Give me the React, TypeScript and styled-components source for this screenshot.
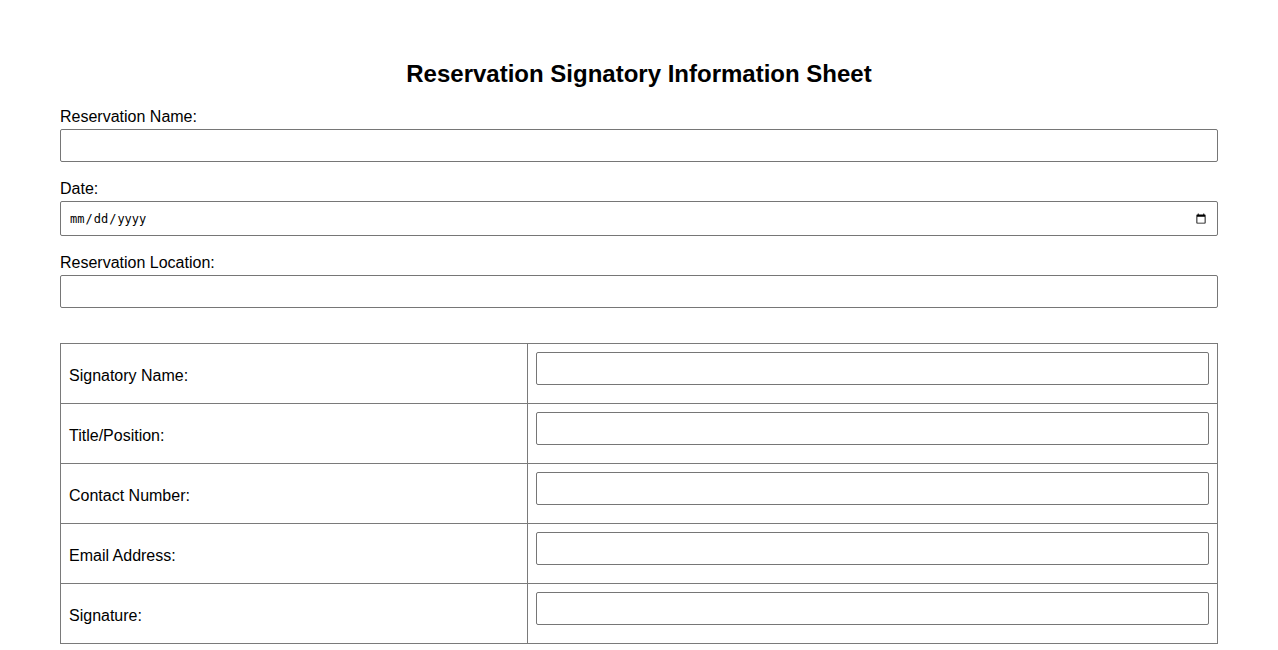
import styled, { createGlobalStyle } from "styled-components";

const GlobalStyle = createGlobalStyle`
  body {
    margin: 0;
    background: #fff;
    font-family: "Liberation Sans", Arial, sans-serif;
    color: #000;
  }
`;

const StyledSheet = styled.div`
  padding: 40px 60px 20px;

  h1 {
    margin: 20px 0 20px;
    text-align: center;
    font-size: 24px;
    font-weight: 700;
  }
`;

const Field = styled.div`
  margin-bottom: 18px;

  label {
    display: block;
    font-size: 16px;
    line-height: 18px;
    margin-bottom: 3px;
  }
`;

const TextInput = styled.input<{ $tall?: boolean }>`
  display: block;
  width: 100%;
  box-sizing: border-box;
  height: ${(p) => (p.$tall ? "35px" : "33px")};
  padding: 0 8px;
  border: 1px solid #767676;
  border-radius: 2px;
  background: #fff;
  font-family: "DejaVu Sans Mono", "Liberation Mono", monospace;
  font-size: 12px;
  color: #000;
`;

const SignatoryTable = styled.table`
  width: 100%;
  margin-top: 35px;
  border-collapse: collapse;
  table-layout: fixed;

  td {
    border: 1px solid #7a7a7a;
    padding: 8px;
    font-size: 16px;
    vertical-align: middle;
  }

  td.label {
    padding-top: 12px;
  }

  td input {
    margin-bottom: 10px;
  }
`;

const rows = [
  "Signatory Name:",
  "Title/Position:",
  "Contact Number:",
  "Email Address:",
  "Signature:",
];

const App = () => {
  return (
    <StyledSheet>
      <GlobalStyle />
      <h1>Reservation Signatory Information Sheet</h1>
      <Field>
        <label>Reservation Name:</label>
        <TextInput type="text" />
      </Field>
      <Field>
        <label>Date:</label>
        <TextInput type="date" $tall />
      </Field>
      <Field>
        <label>Reservation Location:</label>
        <TextInput type="text" />
      </Field>
      <SignatoryTable>
        <colgroup>
          <col style={{ width: "467px" }} />
          <col />
        </colgroup>
        <tbody>
          {rows.map((r) => (
            <tr key={r}>
              <td className="label">{r}</td>
              <td>
                <TextInput type="text" />
              </td>
            </tr>
          ))}
        </tbody>
      </SignatoryTable>
    </StyledSheet>
  );
};

export default App;
